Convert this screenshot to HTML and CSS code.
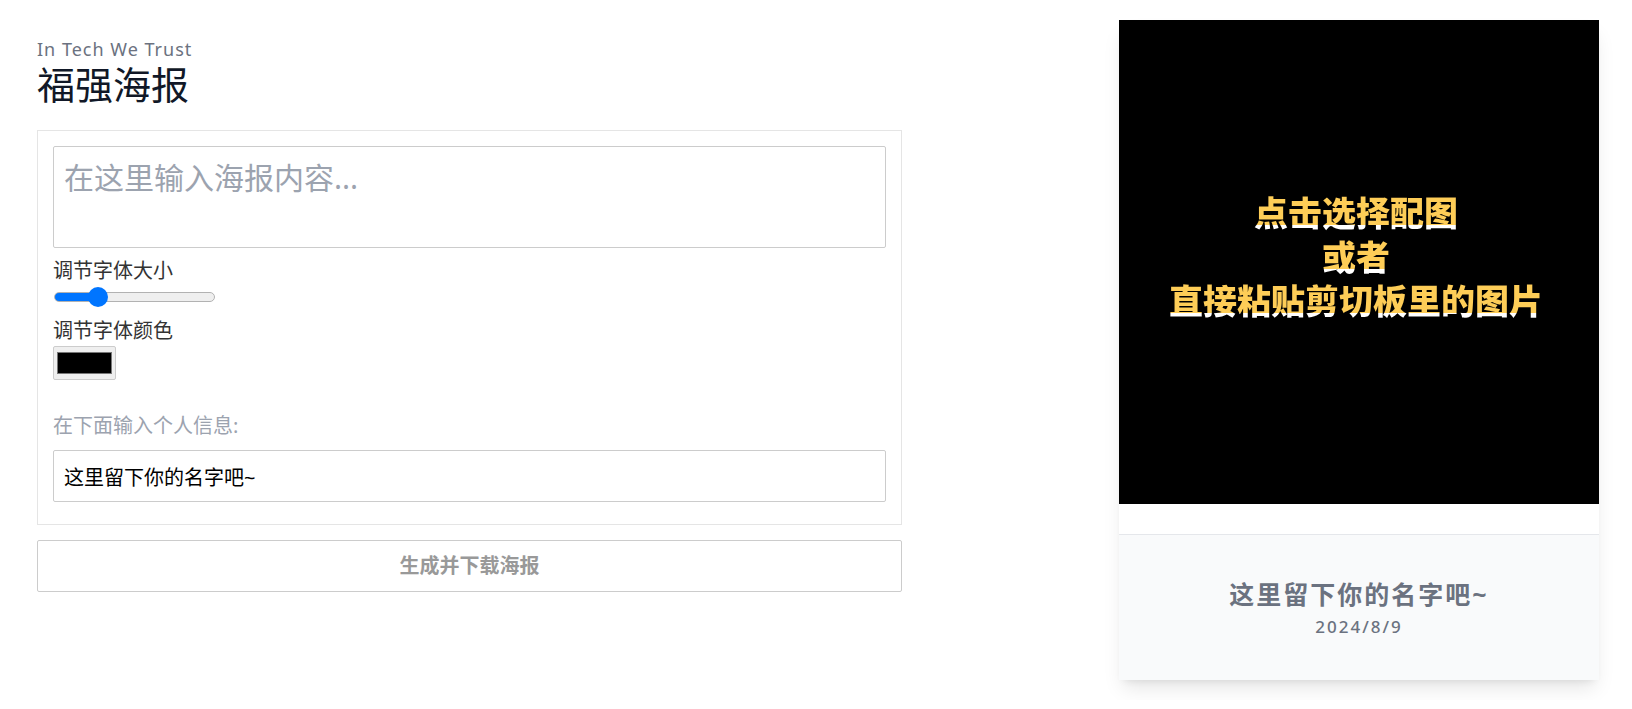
FILE: index.html
```html
<!DOCTYPE html>
<html lang="zh-CN">
<head>
<meta charset="utf-8">
<meta name="viewport" content="width=device-width, initial-scale=1">
<title>福强海报</title>
<link rel="stylesheet" href="styles.css">
</head>
<body>
<main class="page">
  <section class="editor">
    <header class="editor-header">
      <p class="tagline">In Tech We Trust</p>
      <h1 class="title">福强海报</h1>
    </header>
    <form class="form">
      <div class="panel">
        <textarea class="field content-field" aria-label="海报内容" placeholder="在这里输入海报内容..."></textarea>
        <label class="label" for="size">调节字体大小</label>
        <input class="slider" id="size" type="range" min="0" max="100" value="24">
        <label class="label" for="color">调节字体颜色</label>
        <input class="color" id="color" type="color" value="#000000">
        <label class="label hint" for="name">在下面输入个人信息:</label>
        <input class="field name-field" id="name" type="text" value="这里留下你的名字吧~">
      </div>
      <button class="submit" type="button">生成并下载海报</button>
    </form>
  </section>
  <article class="poster">
    <button class="picture" type="button">
      <span class="picture-line">点击选择配图</span>
      <span class="picture-line">或者</span>
      <span class="picture-line">直接粘贴剪切板里的图片</span>
    </button>
    <footer class="signature">
      <p class="signature-name">这里留下你的名字吧~</p>
      <time class="signature-date" datetime="2024-08-09">2024/8/9</time>
    </footer>
  </article>
</main>
</body>
</html>
```
FILE: styles.css
```css
* {
  box-sizing: border-box;
}

body {
  margin: 0;
  background: #fff;
  color: #333;
  font-family: "Noto Sans", "Noto Sans CJK SC", sans-serif;
  font-size: 20px;
  line-height: 30px;
}

h1,
p {
  margin: 0;
}

button,
input,
textarea {
  font: inherit;
}

.page {
  display: flex;
  align-items: flex-start;
  justify-content: space-between;
  padding: 20px 33px 20px 37px;
}

.editor {
  flex: 0 1 865px;
  padding-top: 16px;
}

.editor-header {
  margin-bottom: 24px;
}

.tagline {
  color: #6b7280;
  font-size: 18px;
  line-height: 26px;
  letter-spacing: 1px;
}

.title {
  color: #111827;
  font-size: 38px;
  font-weight: 400;
  line-height: 44px;
}

.form {
  display: flex;
  flex-direction: column;
  gap: 15px;
}

.panel {
  display: flex;
  flex-direction: column;
  align-items: flex-start;
  padding: 15px 15px 22px;
  border: 1px solid #e5e5e5;
}

.field {
  display: block;
  width: 100%;
  padding: 10px;
  border: 1px solid #ccc;
  border-radius: 2px;
  background: #fff;
  color: #000;
}

.content-field {
  height: 102px;
  margin-bottom: 8px;
  font-size: 30px;
  line-height: 42px;
  resize: none;
}

.content-field::placeholder {
  color: #9ca3af;
  opacity: 1;
}

.slider {
  width: 161px;
  height: 20px;
  margin: 1px 0 9px 1px;
  appearance: none;
  background: transparent;
}

.slider::-webkit-slider-runnable-track {
  height: 10px;
  border: 1px solid #b2b2b2;
  border-radius: 5px;
  background: linear-gradient(to right, #0075ff 28%, #efefef 28%) border-box;
}

.slider::-webkit-slider-thumb {
  width: 20px;
  height: 20px;
  margin-top: -6px;
  appearance: none;
  border-radius: 50%;
  background: #0075ff;
}

.color {
  width: 63px;
  height: 34px;
  margin-bottom: 31px;
  padding: 0;
  appearance: none;
  border: 1px solid #ccc;
  border-radius: 2px;
  background: #efefef;
}

.color::-webkit-color-swatch-wrapper {
  padding: 5px 3px;
}

.color::-webkit-color-swatch {
  border: 1px solid #777;
  border-radius: 0;
}

.hint {
  margin-bottom: 9px;
  color: #9ca3af;
}

.name-field {
  height: 52px;
}

.submit {
  height: 52px;
  border: 1px solid #ccc;
  border-radius: 2px;
  background: #fff;
  color: #999;
  font-weight: 700;
}

.poster {
  flex: 0 0 480px;
  background: #fff;
  box-shadow: 0 12px 19px -4px rgba(0, 0, 0, 0.1), 0 5px 8px -5px rgba(0, 0, 0, 0.1);
}

.picture {
  display: block;
  width: 100%;
  height: 484px;
  margin-bottom: 30px;
  padding: 0 6px 12px 0;
  border: 0;
  background: #000;
  font-family: "Noto Sans CJK SC", sans-serif;
  font-size: 34px;
  font-weight: 900;
  line-height: 44px;
}

.picture-line {
  display: block;
  background: linear-gradient(#fecd57 35px, #fff 35px);
  background-clip: text;
  color: transparent;
}

.signature {
  display: flex;
  flex-direction: column;
  align-items: center;
  padding: 40px 0;
  border-top: 1px solid #e5e7eb;
  background: #f9fafb;
  color: #6b7280;
}

.signature-name {
  font-size: 25px;
  font-weight: 700;
  line-height: 38px;
  letter-spacing: 2px;
}

.signature-date {
  font-size: 17px;
  font-weight: 500;
  line-height: 27px;
  letter-spacing: 2px;
}
```
